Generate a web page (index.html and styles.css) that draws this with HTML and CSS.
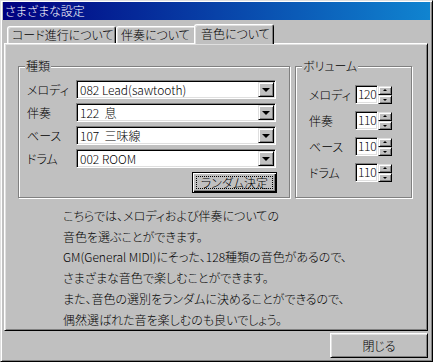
FILE: index.html
```html
<!DOCTYPE html>
<html lang="ja">
<head>
    <meta charset="UTF-8">
    <title>さまざまな設定</title>
    <link rel="stylesheet" href="styles.css">
</head>
<body>
    <div class="window">
        <div class="title-bar">さまざまな設定</div>
        <div class="content">
            <div class="tabs">
                <div class="tab tab-chord">コード進行について</div>
                <div class="tab tab-accomp">伴奏について</div>
                <div class="tab tab-tone selected">音色について</div>
            </div>
            <div class="panel">
                <div class="groups">
                    <div class="group group-kind">
                        <span class="legend">種類</span>
                        <div class="rows">
                            <div class="row">
                                <span class="label">メロディ</span>
                                <div class="combo"><span class="combo-text">082 Lead(sawtooth)</span><span class="drop"></span></div>
                            </div>
                            <div class="row">
                                <span class="label">伴奏</span>
                                <div class="combo"><span class="combo-text">122&nbsp; 息</span><span class="drop"></span></div>
                            </div>
                            <div class="row">
                                <span class="label">ベース</span>
                                <div class="combo"><span class="combo-text">107&nbsp; 三味線</span><span class="drop"></span></div>
                            </div>
                            <div class="row">
                                <span class="label">ドラム</span>
                                <div class="combo"><span class="combo-text">002 ROOM</span><span class="drop"></span></div>
                            </div>
                        </div>
                        <div class="btn-line">
                            <div class="btn btn-default"><span class="focus">ランダム決定</span></div>
                        </div>
                    </div>
                    <div class="group group-volume">
                        <span class="legend">ボリューム</span>
                        <div class="vol-rows">
                            <div class="vol-row">
                                <span class="vol-label">メロディ</span>
                                <div class="edit">120</div>
                                <div class="spin"><span class="spin-up"></span><span class="spin-down"></span></div>
                            </div>
                            <div class="vol-row">
                                <span class="vol-label">伴奏</span>
                                <div class="edit">110</div>
                                <div class="spin"><span class="spin-up"></span><span class="spin-down"></span></div>
                            </div>
                            <div class="vol-row">
                                <span class="vol-label">ベース</span>
                                <div class="edit">110</div>
                                <div class="spin"><span class="spin-up"></span><span class="spin-down"></span></div>
                            </div>
                            <div class="vol-row">
                                <span class="vol-label">ドラム</span>
                                <div class="edit">110</div>
                                <div class="spin"><span class="spin-up"></span><span class="spin-down"></span></div>
                            </div>
                        </div>
                    </div>
                </div>
                <p class="desc">
                    こちらでは、メロディおよび伴奏についての<br>
                    音色を選ぶことができます。<br>
                    GM(General MIDI)にそった、128種類の音色があるので、<br>
                    さまざまな音色で楽しむことができます。<br>
                    また、音色の選別をランダムに決めることができるので、<br>
                    偶然選ばれた音を楽しむのも良いでしょう。
                </p>
            </div>
            <div class="footer">
                <div class="btn btn-close">閉じる</div>
            </div>
        </div>
    </div>
</body>
</html>
```

FILE: styles.css
```css
* {
    box-sizing: border-box;
}
body {
    margin: 0;
    background: #c0c0c0;
    font-family: "Noto Sans CJK JP", sans-serif;
    font-size: 12px;
    font-weight: 300;
    color: #000;
    font-feature-settings: "palt";
}

/* window frame */
.window {
    width: 433px;
    height: 362px;
    border: 1px solid;
    border-color: #dfdfdf #000 #000 #dfdfdf;
    box-shadow: inset 1px 1px #fff, inset -1px -1px #808080;
    padding: 1px 2px 2px 2px;
    display: flex;
    flex-direction: column;
}
.title-bar {
    height: 18px;
    line-height: 18px;
    padding-left: 2px;
    color: #fff;
    background: linear-gradient(90deg, #000080, #1084d0);
}
.content {
    padding: 4px 2px 0 1px;
}

/* tabs */
.tabs {
    display: flex;
    align-items: flex-end;
    height: 19px;
    padding-left: 3px;
}
.tab {
    height: 17px;
    line-height: 15px;
    padding-left: 4px;
    border: 1px solid #fff;
    border-bottom: none;
    border-right-color: #000;
    border-radius: 3px 3px 0 0;
    box-shadow: inset 1px 1px #dfdfdf, inset -1px 0 #808080;
    white-space: nowrap;
}
.tab-chord {
    width: 109px;
}
.tab-accomp {
    width: 80px;
}
.tab-tone {
    width: 80px;
}
.tab.selected {
    position: relative;
    z-index: 1;
    height: 20px;
    line-height: 17px;
    margin: 0 -2px -1px;
    padding-left: 6px;
    background: #c0c0c0;
}

.panel {
    height: 288px;
    border: 1px solid;
    border-color: #fff #000 #000 #fff;
    box-shadow: inset 1px 1px #dfdfdf, inset -1px -1px #808080;
    padding: 22px 0 0 13px;
}
.groups {
    display: flex;
    gap: 5px;
}
.group {
    position: relative;
    height: 132px;
    border: 1px solid #808080;
    box-shadow: 1px 1px #fff, inset 1px 1px #fff;
}
.legend {
    position: absolute;
    top: -8px;
    left: 6px;
    padding: 0 1px;
    line-height: 14px;
    background: #c0c0c0;
}
.group-kind {
    width: 272px;
    padding: 13px 13px 0 8px;
}
.group-volume {
    width: 117px;
    padding: 18px 0 0 13px;
}

/* combo boxes */
.rows {
    display: flex;
    flex-direction: column;
    gap: 4px;
}
.row {
    display: flex;
    align-items: center;
    height: 19px;
}
.label {
    width: 49px;
}
.combo {
    display: flex;
    width: 200px;
    height: 19px;
    background: #fff;
    border: 1px solid;
    border-color: #808080 #fff #fff #808080;
    box-shadow: inset 1px 1px #000, inset -1px -1px #dfdfdf;
    padding: 1px;
}
.combo-text {
    flex: 1;
    padding-left: 2px;
    line-height: 15px;
    white-space: nowrap;
}
.drop, .spin span {
    position: relative;
    background: #c0c0c0;
    border: 1px solid;
    border-color: #dfdfdf #000 #000 #dfdfdf;
    box-shadow: inset 1px 1px #fff, inset -1px -1px #808080;
}
.drop {
    width: 16px;
    height: 15px;
}
.drop::after {
    content: "";
    position: absolute;
    left: 3px;
    top: 5px;
    border: 4px solid transparent;
    border-top: 4px solid #000;
    border-bottom: none;
}

/* buttons */
.btn-line {
    display: flex;
    justify-content: flex-end;
    margin: 4px -1px 0 0;
}
.btn {
    display: flex;
    align-items: center;
    justify-content: center;
    background: #c0c0c0;
    border: 1px solid;
    border-color: #fff #000 #000 #fff;
    box-shadow: inset 1px 1px #dfdfdf, inset -1px -1px #808080;
}
.btn-default {
    width: 85px;
    height: 21px;
    border: 1px solid #000;
    box-shadow: inset 1px 1px #fff, inset -1px -1px #000, inset -2px -2px #808080;
    padding: 3px;
}
.focus {
    flex: 1;
    align-self: stretch;
    text-align: center;
    line-height: 11px;
    border: 1px dotted #000;
}
.footer {
    display: flex;
    justify-content: flex-end;
    padding-top: 2px;
}
.btn-close {
    width: 98px;
    height: 25px;
}

/* volume spinners */
.vol-rows {
    display: flex;
    flex-direction: column;
    gap: 7px;
}
.vol-row {
    display: flex;
    align-items: center;
    height: 19px;
}
.vol-label {
    width: 46px;
}
.edit {
    width: 23px;
    height: 19px;
    line-height: 15px;
    padding-left: 2px;
    letter-spacing: -0.3px;
    background: #fff;
    border: 1px solid;
    border-color: #808080 #fff #fff #808080;
    box-shadow: inset 1px 1px #000, inset -1px -1px #dfdfdf;
}
.spin {
    display: flex;
    flex-direction: column;
    width: 14px;
    height: 18px;
}
.spin span {
    height: 9px;
}
.spin span::after {
    content: "";
    position: absolute;
    left: 4px;
    top: 2px;
    border: 2px solid transparent;
}
.spin-up::after {
    border-bottom: 2px solid #000 !important;
    border-top: none !important;
}
.spin-down::after {
    border-top: 2px solid #000 !important;
    border-bottom: none !important;
    top: 3px !important;
}

.desc {
    margin: 8px 0 0 45px;
    line-height: 20.7px;
    white-space: nowrap;
}
```
